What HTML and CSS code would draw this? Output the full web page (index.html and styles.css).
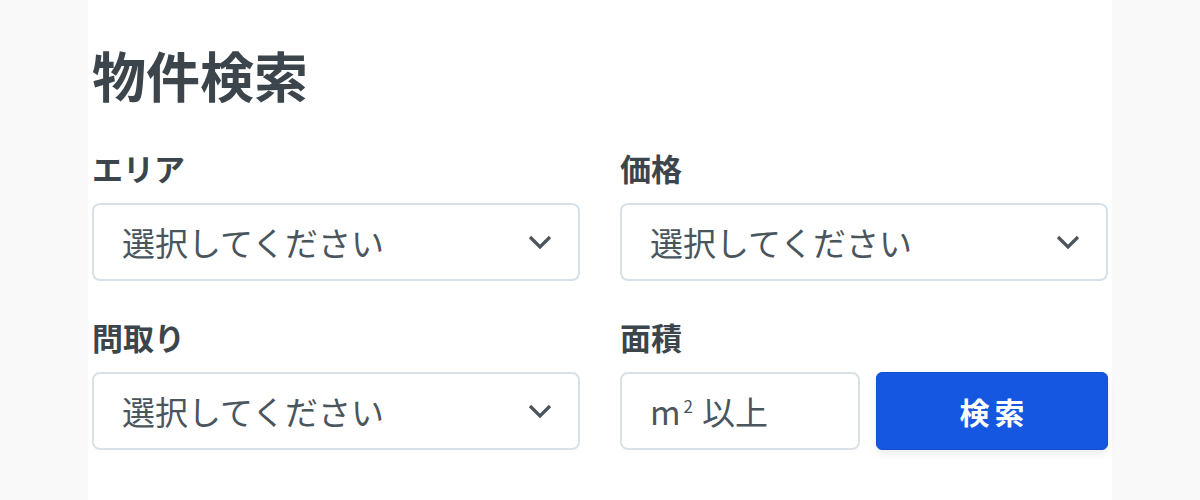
FILE: index.html
```html
<!DOCTYPE html>
<html lang="ja">
<head>
  <meta charset="UTF-8" />
  <meta name="viewport" content="width=device-width, initial-scale=1.0" />
  <title>物件検索</title>
  <link rel="stylesheet" href="styles.css">
</head>
<body>
  <div class="panel">
    <h1>物件検索</h1>

    <form class="search-form">
      <div class="field">
        <label>エリア</label>
        <div class="select">
          <span>選択してください</span>
          <svg class="chevron" width="24" height="14" viewBox="0 0 24 14"><polyline points="2,2 12,12 22,2" /></svg>
        </div>
      </div>

      <div class="field">
        <label>価格</label>
        <div class="select">
          <span>選択してください</span>
          <svg class="chevron" width="24" height="14" viewBox="0 0 24 14"><polyline points="2,2 12,12 22,2" /></svg>
        </div>
      </div>

      <div class="field">
        <label>問取り</label>
        <div class="select">
          <span>選択してください</span>
          <svg class="chevron" width="24" height="14" viewBox="0 0 24 14"><polyline points="2,2 12,12 22,2" /></svg>
        </div>
      </div>

      <div class="field">
        <label>面積</label>
        <div class="area-row">
          <div class="area-input">m<sup>2</sup>以上</div>
          <button type="submit">検索</button>
        </div>
      </div>
    </form>
  </div>
</body>
</html>
```

FILE: styles.css
```css
* {
  margin: 0;
  padding: 0;
  box-sizing: border-box;
  font-family: 'Noto Sans CJK JP', 'Noto Sans', sans-serif;
}

body {
  height: 100vh;
  background: #f9f9f9;
  overflow: hidden;
}

.panel {
  width: 1024px;
  height: 100%;
  margin: 0 auto;
  padding: 0 4px;
  background: #fff;
}

h1 {
  padding-top: 43px;
  font-size: 54px;
  line-height: 64px;
  font-weight: 700;
  color: #3c454b;
}

.search-form {
  display: grid;
  grid-template-columns: 1fr 1fr;
  column-gap: 40px;
  row-gap: 38px;
  margin-top: 43px;
}

.field label {
  display: block;
  font-size: 31px;
  line-height: 36px;
  font-weight: 700;
  color: #3c454b;
  margin-bottom: 17px;
}

.select,
.area-input {
  display: flex;
  align-items: center;
  justify-content: space-between;
  height: 78px;
  padding: 0 26px 0 28px;
  background: #fff;
  border: 2px solid #d9e1e8;
  border-radius: 8px;
  font-size: 33px;
  color: #4a555c;
}

.chevron {
  fill: none;
  stroke: #4a555c;
  stroke-width: 3.2;
}

.area-row {
  display: flex;
  gap: 16px;
}

.area-input {
  width: 240px;
  justify-content: flex-start;
}

.area-input sup {
  font-size: 17px;
  margin: 0 9px 0 3px;
  position: relative;
  top: -6px;
}

button {
  flex: 1;
  height: 78px;
  background: #1557e1;
  color: #fff;
  border: 1px solid #1350cf;
  border-radius: 6px;
  font-size: 30px;
  font-weight: 700;
  letter-spacing: 5px;
  padding-left: 5px;
  box-shadow: 0 4px 10px rgba(0, 0, 0, 0.08);
  cursor: pointer;
}
```
